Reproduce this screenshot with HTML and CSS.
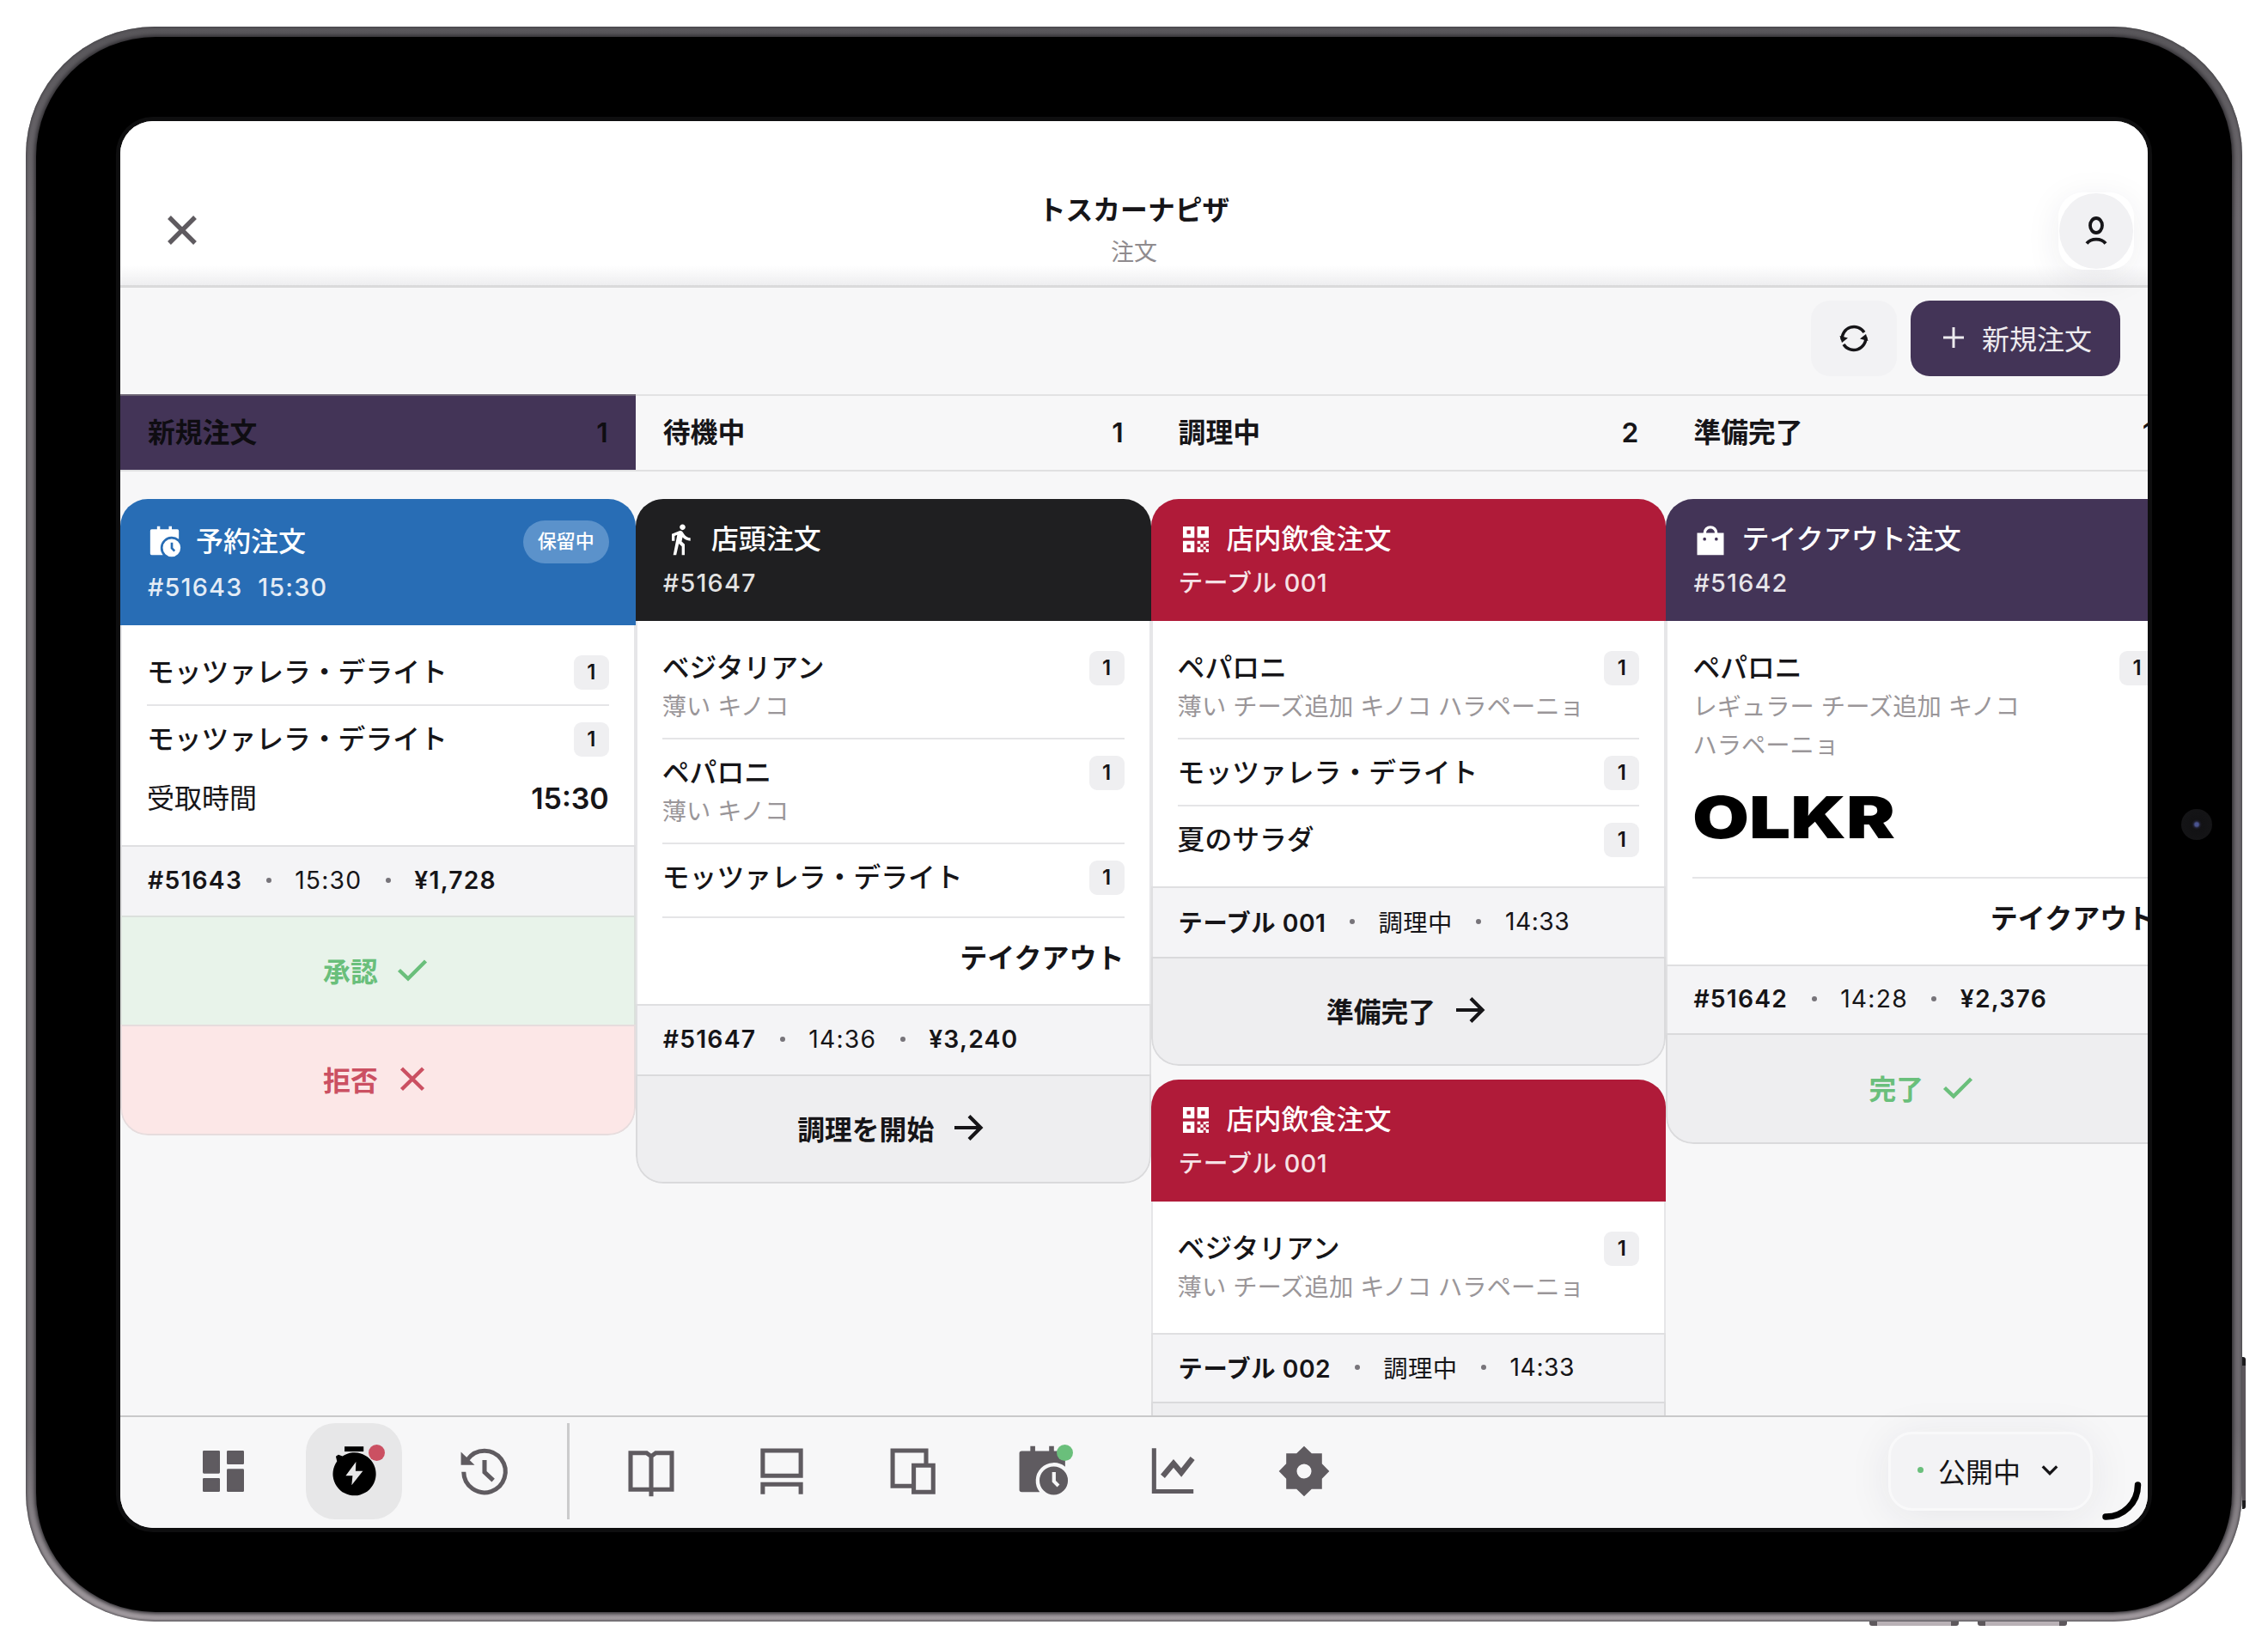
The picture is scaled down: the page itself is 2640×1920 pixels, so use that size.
FILE: index.html
```html
<!DOCTYPE html>
<html lang="ja">
<head>
    <meta charset="UTF-8">
    <meta name="viewport" content="width=device-width, initial-scale=1.0">
    <title>トスカーナピザ - 注文</title>
    <link rel="stylesheet" href="styles.css">
</head>
<body>
    <!-- Icons shared by several cards -->
    <svg class="sprite" aria-hidden="true">
        <symbol id="icon-qr" viewBox="0 0 24 24">
            <path fill-rule="evenodd" d="M3 3h8v8H3zM5.7 5.7v2.6h2.6V5.7zM13 3h8v8h-8zM15.7 5.7v2.6h2.6V5.7zM3 13h8v8H3zM5.7 15.7v2.6h2.6v-2.6z"/>
            <path d="M13 13h2.2v2.2H13zM15.2 15.2h2v2h-2zM13 17.2h2.2v3.8H13zM15.2 19h2v2h-2zM17.2 13.2h1.8v2h-1.8zM19 15.2h2v1.8h-2zM17.2 17.2h1.8V19h-1.8zM19 13h2v1.2h-2zM19 18.6h2V21h-2z"/>
        </symbol>
        <symbol id="icon-calendar" viewBox="0 0 24 24">
            <path d="M21.700 10V4.200a1 1 0 0 0-1-1h-3.900V1h-2.100v2.200H8.600V1H6.500v2.200H2.700a1 1 0 0 0-1 1v15.900a1 1 0 0 0 1 1h7.900A7.900 7.900 0 0 1 21.700 10z"/>
            <path fill-rule="evenodd" d="M16.700 9.900a6.200 6.200 0 1 0 0 12.400 6.200 6.200 0 0 0 0-12.400zM17.600 12.400h-1.600v4.300l2.200 2.200 1.100-1.100-1.700-1.700z"/>
        </symbol>
        <symbol id="icon-check" viewBox="0 0 40 40">
            <path d="M4.500 20.500 15 30.500 35.500 10" fill="none" stroke="currentColor" stroke-width="4.400"/>
        </symbol>
        <symbol id="icon-arrow" viewBox="0 0 40 40">
            <path d="M4 20h30M21 6.500 34.500 20 21 33.500" fill="none" stroke="currentColor" stroke-width="4.200"/>
        </symbol>
    </svg>

    <div class="device">
        <div class="bezel">
            <main class="screen">
                <header class="topbar">
                    <svg class="close" viewBox="0 0 40 40"><path d="M5 5l30 30M35 5L5 35" fill="none" stroke="currentColor" stroke-width="5.400"/></svg>
                    <div class="heading">
                        <h1>トスカーナピザ</h1>
                        <p>注文</p>
                    </div>
                    <div class="profile">
                        <div class="profile-circle">
                            <svg viewBox="0 0 32 40"><ellipse cx="16" cy="13.500" rx="7" ry="8.500"/><path d="M5 34.500c5-6.500 17-6.500 22 0"/></svg>
                        </div>
                    </div>
                </header>

                <div class="toolbar">
                    <button class="refresh">
                        <svg viewBox="0 0 40 40">
                            <path d="M6.200 21.500A14 14 0 0 1 32 13M33.800 18.500A14 14 0 0 1 8 27" fill="none" stroke="currentColor" stroke-width="3.400"/>
                            <path d="M3.500 17l2.500 8 7-5.500zM36.500 23L34 15l-7 5.500z" fill="currentColor"/>
                        </svg>
                    </button>
                    <button class="new-order">
                        <svg viewBox="0 0 24 24"><path d="M12 0v24M0 12h24" fill="none" stroke="currentColor" stroke-width="3"/></svg>
                        新規注文
                    </button>
                </div>

                <div class="board">
                    <section class="column">
                        <h2 class="column-head active"><span>新規注文</span><span>1</span></h2>
                        <div class="cards">
                            <article class="card">
                                <div class="card-head blue">
                                    <div class="card-title">
                                        <svg><use href="#icon-calendar"/></svg>
                                        予約注文
                                        <span class="pill">保留中</span>
                                    </div>
                                    <div class="card-sub spaced">#51643&nbsp; 15:30</div>
                                </div>
                                <div class="card-body">
                                    <div class="item"><span>モッツァレラ・デライト</span><span class="qty">1</span></div>
                                    <div class="item"><span>モッツァレラ・デライト</span><span class="qty">1</span></div>
                                    <div class="pickup"><span>受取時間</span><b>15:30</b></div>
                                </div>
                                <div class="meta spaced"><b>#51643</b><i></i><span>15:30</span><i></i><b>¥1,728</b></div>
                                <button class="action accept">承認 <svg><use href="#icon-check"/></svg></button>
                                <button class="action reject">拒否 <svg viewBox="0 0 40 40"><path d="M7.500 8 32.500 32.500M32.500 8 7.500 32.500" fill="none" stroke="currentColor" stroke-width="4.400"/></svg></button>
                            </article>
                        </div>
                    </section>

                    <section class="column">
                        <h2 class="column-head"><span>待機中</span><span>1</span></h2>
                        <div class="cards">
                            <article class="card">
                                <div class="card-head dark">
                                    <div class="card-title">
                                        <svg viewBox="0 0 24 24"><path d="M13.500 5.500c1.100 0 2-.9 2-2s-.9-2-2-2-2 .9-2 2 .9 2 2 2zM9.800 8.900 7 23h2.100l1.800-8 2.100 2v6h2v-7.500l-2.100-2 .6-3C14.800 12 16.800 13 19 13v-2c-1.900 0-3.500-1-4.300-2.400l-1-1.600c-.4-.6-1-1-1.700-1-.3 0-.5.1-.8.1L6 8.300V13h2V9.600l1.800-.7"/></svg>
                                        店頭注文
                                    </div>
                                    <div class="card-sub spaced">#51647</div>
                                </div>
                                <div class="card-body">
                                    <div class="item has-mods"><span>ベジタリアン</span><span class="qty">1</span><p>薄い キノコ</p></div>
                                    <div class="item has-mods"><span>ペパロニ</span><span class="qty">1</span><p>薄い キノコ</p></div>
                                    <div class="item"><span>モッツァレラ・デライト</span><span class="qty">1</span></div>
                                    <div class="kind">テイクアウト</div>
                                </div>
                                <div class="meta spaced"><b>#51647</b><i></i><span>14:36</span><i></i><b>¥3,240</b></div>
                                <button class="action">調理を開始 <svg><use href="#icon-arrow"/></svg></button>
                            </article>
                        </div>
                    </section>

                    <section class="column">
                        <h2 class="column-head"><span>調理中</span><span>2</span></h2>
                        <div class="cards">
                            <article class="card">
                                <div class="card-head red">
                                    <div class="card-title">
                                        <svg><use href="#icon-qr"/></svg>
                                        店内飲食注文
                                    </div>
                                    <div class="card-sub">テーブル 001</div>
                                </div>
                                <div class="card-body">
                                    <div class="item has-mods"><span>ペパロニ</span><span class="qty">1</span><p>薄い チーズ追加 キノコ ハラペーニョ</p></div>
                                    <div class="item"><span>モッツァレラ・デライト</span><span class="qty">1</span></div>
                                    <div class="item"><span>夏のサラダ</span><span class="qty">1</span></div>
                                </div>
                                <div class="meta"><b>テーブル 001</b><i></i><span>調理中</span><i></i><span>14:33</span></div>
                                <button class="action">準備完了 <svg><use href="#icon-arrow"/></svg></button>
                            </article>
                            <article class="card">
                                <div class="card-head red">
                                    <div class="card-title">
                                        <svg><use href="#icon-qr"/></svg>
                                        店内飲食注文
                                    </div>
                                    <div class="card-sub">テーブル 001</div>
                                </div>
                                <div class="card-body">
                                    <div class="item has-mods"><span>ベジタリアン</span><span class="qty">1</span><p>薄い チーズ追加 キノコ ハラペーニョ</p></div>
                                </div>
                                <div class="meta short"><b>テーブル 002</b><i></i><span>調理中</span><i></i><span>14:33</span></div>
                                <button class="action"></button>
                            </article>
                        </div>
                    </section>

                    <section class="column">
                        <h2 class="column-head"><span>準備完了</span><span>1</span></h2>
                        <div class="cards">
                            <article class="card">
                                <div class="card-head purple">
                                    <div class="card-title">
                                        <svg viewBox="0 0 24 24"><path fill-rule="evenodd" d="M21.300 7.500H17a5 5 0 0 0-10 0H2.700V23h18.600zM9 7.500a3 3 0 0 1 6 0zM9 11.800a1.100 1.100 0 1 1-2.200 0 1.100 1.100 0 0 1 2.200 0zm8.200 0a1.100 1.100 0 1 1-2.200 0 1.100 1.100 0 0 1 2.200 0z"/></svg>
                                        テイクアウト注文
                                    </div>
                                    <div class="card-sub spaced">#51642</div>
                                </div>
                                <div class="card-body">
                                    <div class="item has-mods"><span>ペパロニ</span><span class="qty">1</span><p>レギュラー チーズ追加 キノコ<br>ハラペーニョ</p></div>
                                    <svg class="brand" viewBox="0 0 236 50"><text x="0" y="49" textLength="236" lengthAdjust="spacingAndGlyphs">OLKR</text></svg>
                                    <div class="kind">テイクアウト</div>
                                </div>
                                <div class="meta spaced short"><b>#51642</b><i></i><span>14:28</span><i></i><b>¥2,376</b></div>
                                <button class="action done">完了 <svg><use href="#icon-check"/></svg></button>
                            </article>
                        </div>
                    </section>
                </div>

                <nav class="navbar">
                    <a class="nav-item"><svg viewBox="0 0 24 24"><path d="M3.500 3.500h6.500v9H3.500zM14 3.500h6.500v5H14zM3.500 15.500h6.500v5H3.500zM14 11.500h6.500v9H14z" stroke="currentColor" stroke-linejoin="round"/></svg></a>
                    <a class="nav-item active">
                        <svg viewBox="0 0 24 24"><path d="M7.900 1.200h8.300v2.200H7.900z"/><path fill-rule="evenodd" d="M4.100 5.500 5.200 4.800 7 5.400A9.400 9.400 0 1 1 4.600 7.700zM12.900 7.900 8.400 14h3l-.4 4.100 4.900-6.200h-3.200z"/></svg>
                        <span class="dot dot-red"></span>
                    </a>
                    <a class="nav-item"><svg viewBox="0 0 24 24"><path d="M2.900 12.300A9.100 9.100 0 1 0 4.600 6.900M12 7.100v5.300l3.800 3.600" fill="none" stroke="currentColor" stroke-width="1.900"/><path d="M1.700 3.600v5.700h6z"/></svg></a>
                    <span class="nav-divider"></span>
                    <a class="nav-item"><svg viewBox="0 0 24 24"><path d="M3 4h7l2 1.500L14 4h7v16H3zM12 5v18" fill="none" stroke="currentColor" stroke-width="1.900"/></svg></a>
                    <a class="nav-item"><svg viewBox="0 0 24 24"><path d="M3.700 3h16.600v11H3.700zM3.700 22v-4.300h16.600V22" fill="none" stroke="currentColor" stroke-width="1.900"/></svg></a>
                    <a class="nav-item"><svg viewBox="0 0 24 24"><path d="M18 8.500V3H3.400v15.500h8.300M12.600 9.500h8.500v11.600h-8.500z" fill="none" stroke="currentColor" stroke-width="1.900"/></svg></a>
                    <a class="nav-item">
                        <svg><use href="#icon-calendar"/></svg>
                        <span class="dot dot-green"></span>
                    </a>
                    <a class="nav-item"><svg viewBox="0 0 24 24"><path d="M3.500 2v18.800h17.200" fill="none" stroke="currentColor" stroke-width="1.900"/><path d="M7.300 14.200l4.700-5.600 3.400 4 4.900-6.200" fill="none" stroke="currentColor" stroke-width="2.400"/></svg></a>
                    <a class="nav-item"><svg viewBox="0 0 24 24"><path fill-rule="evenodd" d="M12 1l3.300 3.200h4.500v4.500L23 12l-3.200 3.300v4.500h-4.500L12 23l-3.300-3.200H4.200v-4.500L1 12l3.200-3.300V4.200h4.500zM12 8.800a3.200 3.200 0 1 0 0 6.400 3.200 3.200 0 0 0 0-6.400z"/></svg></a>
                    <button class="status">
                        <span class="status-dot"></span>
                        公開中
                        <svg viewBox="0 0 24 24"><path d="M3 7l9 9 9-9" fill="none" stroke="currentColor" stroke-width="3.600"/></svg>
                    </button>
                    <svg class="corner-mark" viewBox="0 0 46 46"><path d="M41.500 4A37 37 0 0 1 4 41" fill="none" stroke="#000" stroke-width="7.500" stroke-linecap="round"/></svg>
                </nav>
            </main>
            <span class="camera"></span>
        </div>
        <span class="hw-button power"></span>
        <span class="hw-button volume-up"></span>
        <span class="hw-button volume-down"></span>
    </div>
</body>
</html>
```
FILE: styles.css
```css
* {
    box-sizing: border-box;
}

body {
    margin: 0;
    width: 2640px;
    height: 1920px;
    padding: 31px 30px 32px;
    background: #fff;
    color: #161518;
    font-family: Inter, "Noto Sans CJK JP", sans-serif;
    font-size: 32px;
    overflow: hidden;
}

h1, h2, p {
    margin: 0;
}

button {
    border: 0;
    padding: 0;
    font: inherit;
    color: inherit;
}

svg {
    fill: currentColor;
    flex: none;
}

.sprite {
    display: none;
}

/* Tablet frame */
.device {
    position: relative;
    height: 1857px;
    padding: 12px 12.5px 11px 12px;
    border-radius: 150px;
    background: linear-gradient(#59575b, #6f6b70 12%, #6f6b70 88%, #a39ca1);
    box-shadow: inset 0 0 3px 1px #454347;
}

.bezel {
    position: relative;
    height: 100%;
    padding: 98px 97.5px 97px 98px;
    border-radius: 139px;
    background: #000;
    box-shadow: 0 0 4px 2px #302e32;
}

.screen {
    display: flex;
    flex-direction: column;
    height: 1638px;
    border-radius: 38px;
    background: #f7f7f8;
    box-shadow: 0 0 0 5px #0e0e0f;
    overflow: hidden;
}

.camera {
    position: absolute;
    right: 23px;
    top: 899px;
    width: 36px;
    height: 36px;
    border-radius: 50%;
    background: radial-gradient(circle, #4a5490 0 2px, #1d1d2c 4px, #121214 6px, #161618 100%);
}

.hw-button {
    position: absolute;
    background: #8d868b;
}

.power {
    right: -4px;
    top: 1549px;
    width: 4px;
    height: 177px;
    border: solid #1c1b1d;
    border-width: 10px 0;
    background: #5c575c;
    border-radius: 0 3px 3px 0;
}

.volume-up,
.volume-down {
    bottom: -5px;
    width: 104px;
    height: 5px;
    border: solid #5d585c;
    border-width: 0 9px;
    background: #b9b1b6;
    border-radius: 0 0 3px 3px;
}

.volume-up {
    left: 2146px;
}

.volume-down {
    left: 2272px;
}

/* Top bar */
.topbar {
    display: grid;
    grid-template-columns: 200px 1fr 200px;
    align-items: start;
    height: 194px;
    padding-top: 82px;
    border-bottom: 3px solid #dadadb;
    background: linear-gradient(#fff 168px, #eeeef0 191px);
}

.close {
    width: 40px;
    height: 40px;
    margin: 25px 0 0 52px;
    color: #5f5b60;
}

.heading {
    text-align: center;
}

.heading h1 {
    font-size: 31.8px;
    font-weight: 700;
    line-height: 44px;
}

.heading p {
    font-size: 27px;
    line-height: 40px;
    margin-top: 7px;
    color: #8f8b8e;
}

.profile {
    justify-self: end;
    width: 88px;
    height: 90px;
    margin: 1px 16px 0 0;
    padding: 1px;
    border-radius: 28px;
    background: #fff;
    box-shadow: 0 8px 40px rgba(40, 40, 70, 0.08);
}

.profile-circle {
    display: flex;
    align-items: center;
    justify-content: center;
    width: 86px;
    height: 88px;
    border-radius: 50%;
    background: #f1f1f3;
}

.profile-circle svg {
    width: 32px;
    height: 40px;
    fill: none;
    stroke: #161518;
    stroke-width: 3.8;
}

/* Toolbar */
.toolbar {
    display: flex;
    justify-content: flex-end;
    gap: 16px;
    height: 124px;
    padding: 15px 32px 0 0;
}

.toolbar button {
    display: flex;
    align-items: center;
    justify-content: center;
    height: 88px;
    border-radius: 22px;
}

.refresh {
    width: 100px;
    background: #f2f2f4;
}

.refresh svg {
    width: 40px;
    height: 40px;
}

.toolbar .new-order {
    width: 244px;
    gap: 21px;
    padding: 0 0 2px 5px;
    background: #433457;
    color: #edebef;
}

.new-order svg {
    width: 24px;
    height: 24px;
}

/* Board */
.board {
    display: grid;
    grid-template-columns: repeat(4, 599.8px);
    flex: 1;
    min-height: 0;
    overflow: hidden;
}

.column {
    min-height: 0;
}

.column-head {
    display: flex;
    justify-content: space-between;
    height: 90px;
    padding: 0 32px;
    border-top: 2px solid #e2e2e3;
    border-bottom: 2px solid #e0e0e1;
    font-size: 31.8px;
    font-weight: 600;
    line-height: 86px;
}

.column-head.active {
    background: #433457;
    border-top-color: #6b6373;
    color: #0f0d12;
}

.cards {
    display: flex;
    flex-direction: column;
    gap: 16px;
    padding-top: 32px;
}

.card {
    border-radius: 32px;
    overflow: hidden;
}

.card-head {
    padding: 23px 31px 22px 32px;
    color: #fff;
}

.blue {
    padding-top: 25px;
    background: #286db5;
}

.dark {
    background: #1f1f21;
}

.red {
    background: #b01b39;
}

.purple {
    background: #433457;
}

.card-title {
    display: flex;
    align-items: center;
    gap: 16px;
    min-height: 47px;
    font-weight: 500;
    line-height: 46px;
}

.card-title svg {
    width: 40px;
    height: 40px;
}

.pill {
    width: 100px;
    height: 50px;
    margin-left: auto;
    border-radius: 25px;
    background: #5b92cb;
    font-size: 22px;
    line-height: 49px;
    text-align: center;
}

.card-sub {
    margin-top: 5px;
    font-size: 28.8px;
    font-weight: 500;
    line-height: 45px;
    letter-spacing: 0.4px;
    color: rgba(255, 255, 255, 0.88);
}

.card-body {
    padding: 35px 29px 34px;
    border: solid #e6e6e8;
    border-width: 0 2px;
    background: #fff;
}

.item {
    display: grid;
    grid-template-columns: 1fr auto;
    padding-bottom: 17px;
    font-size: 31.8px;
    font-weight: 500;
    line-height: 40px;
}

.item > span:first-child {
    line-height: 39px;
}

.item + .item {
    padding-top: 19px;
    border-top: 2px solid #e5e5e7;
}

.item.has-mods {
    padding-bottom: 13px;
}

.item:has(+ :not(.item)),
.item:last-child {
    padding-bottom: 0;
}

.has-mods:last-child {
    margin-bottom: -4px;
}

.item p {
    grid-column: 1 / -1;
    margin-top: 3px;
    font-size: 28.3px;
    font-weight: 400;
    line-height: 45px;
    color: #9a9699;
}

.qty {
    width: 41px;
    height: 40px;
    border-radius: 9px;
    background: #efeff1;
    font-size: 24px;
    font-weight: 600;
    text-align: center;
}

.pickup {
    display: flex;
    justify-content: space-between;
    margin-top: 28px;
    line-height: 41px;
}

.pickup b {
    font-size: 34px;
    font-weight: 600;
}

.kind {
    margin-top: 25px;
    padding-top: 27px;
    border-top: 2px solid #e5e5e7;
    font-weight: 600;
    line-height: 39px;
    text-align: right;
}

.brand {
    display: block;
    width: 236px;
    height: 50px;
    margin: 36px 0 44px;
    overflow: visible;
    color: #000;
    font-size: 67px;
    font-weight: 900;
}

.meta {
    display: flex;
    align-items: center;
    gap: 27.5px;
    height: 82px;
    padding: 0 30px 3px;
    border: 2px solid #dfdfe1;
    border-bottom: 0;
    background: #f4f4f6;
    font-size: 28.3px;
    letter-spacing: 0.5px;
}

.meta.short {
    height: 80px;
}

.meta b {
    font-weight: 600;
}

.meta i {
    width: 6px;
    height: 6px;
    border-radius: 50%;
    background: #77747a;
}

.spaced {
    letter-spacing: 1.2px;
}

.action {
    display: flex;
    align-items: center;
    justify-content: center;
    gap: 20px;
    width: 100%;
    height: 127px;
    padding: 0 4px 3px 0;
    border: 2px solid #dadadc;
    background: #eeeef0;
    font-size: 31.8px;
    font-weight: 600;
}

.action:last-child {
    border-radius: 0 0 32px 32px;
}

.action svg {
    width: 40px;
    height: 40px;
}

.accept {
    background: #e8f3ea;
    border-color: #dbe0dc;
    border-bottom: 0;
    color: #6abf7b;
}

.reject {
    height: 129px;
    background: #fce7e7;
    border-color: #e6dcdd;
    color: #cb5062;
}

.done {
    height: 129px;
    color: #6abf7b;
}

/* Bottom navigation */
.navbar {
    position: relative;
    display: flex;
    align-items: center;
    gap: 40px;
    height: 131px;
    padding: 0 64px 4px;
    border-top: 2px solid #c9c9ca;
    background: #f7f7f8;
}

.nav-item {
    position: relative;
    display: flex;
    align-items: center;
    justify-content: center;
    width: 112px;
    height: 112px;
    color: #5f5b60;
}

.nav-item svg {
    width: 64px;
    height: 64px;
}

.nav-item.active {
    border-radius: 34px;
    background: #e7e7e8;
    color: #000;
}

.nav-divider {
    width: 3px;
    height: 112px;
    margin-right: -1px;
    background: #cbcbcc;
}

.dot {
    position: absolute;
    left: 73px;
    top: 25px;
    width: 19px;
    height: 19px;
    border-radius: 50%;
}

.dot-red {
    background: #cb5062;
}

.dot-green {
    left: 72px;
    background: #6abf7b;
}

.status {
    display: flex;
    align-items: center;
    gap: 17px;
    width: 238px;
    height: 92px;
    margin-left: auto;
    padding: 0 0 2px 31px;
    border: 3px solid #f9f9fa;
    border-radius: 28px;
    background: #f3f3f5;
    box-shadow: 0 6px 50px rgba(40, 40, 70, 0.08);
}

.status-dot {
    width: 7px;
    height: 7px;
    border-radius: 50%;
    background: #6abf7b;
}

.status svg {
    width: 22px;
    height: 22px;
    margin-left: 6px;
}

.corner-mark {
    position: absolute;
    right: 7px;
    bottom: 8px;
    width: 46px;
    height: 46px;
}
```
